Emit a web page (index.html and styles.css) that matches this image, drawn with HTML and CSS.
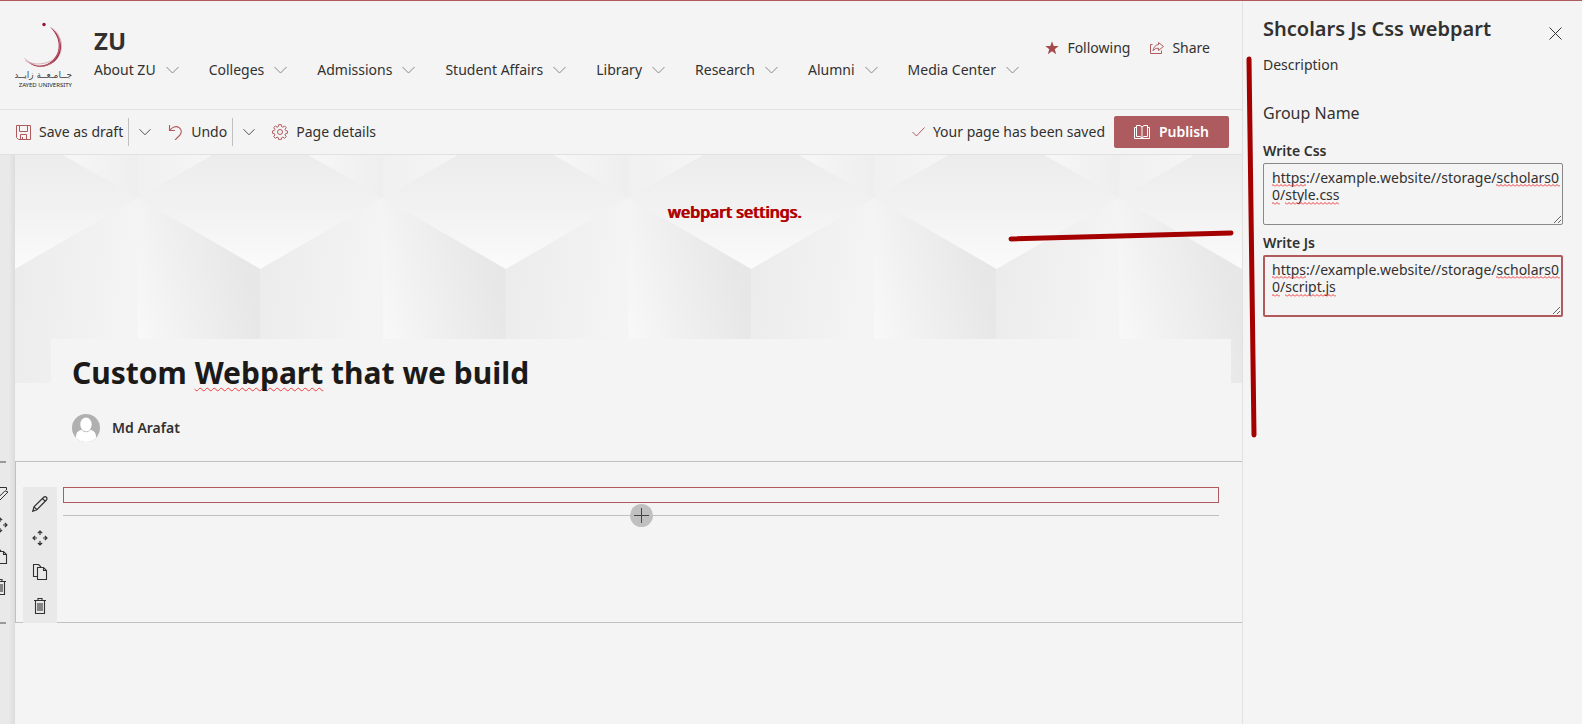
FILE: index.html
```html
<!DOCTYPE html>
<html lang="en">
<head>
<meta charset="utf-8">
<title>ZU - Custom Webpart that we build</title>
<link rel="stylesheet" href="styles.css">
</head>
<body>
<svg class="defs" width="0" height="0" aria-hidden="true">
  <defs>
    <linearGradient id="top" x1="0" y1="0" x2="0" y2="1"><stop offset="0" stop-color="#ececec"/><stop offset=".5" stop-color="#f2f2f2"/><stop offset="1" stop-color="#fbfbfb"/></linearGradient>
    <linearGradient id="left" x1="0" y1="0" x2="1" y2="0.2"><stop offset="0" stop-color="#ebebeb"/><stop offset="1" stop-color="#f4f4f4"/></linearGradient>
    <linearGradient id="right" gradientUnits="userSpaceOnUse" x1="123" y1="200" x2="245" y2="170"><stop offset="0" stop-color="#f9f9f9"/><stop offset=".4" stop-color="#f1f1f1"/><stop offset="1" stop-color="#e7e7e7"/></linearGradient>
    <linearGradient id="wedgeA" x1="0" y1="0" x2="1" y2="0"><stop offset="0" stop-color="#f7f7f7"/><stop offset="1" stop-color="#eeeeee"/></linearGradient>
    <linearGradient id="wedgeB" x1="0" y1="0" x2="1" y2="0"><stop offset="0" stop-color="#f0f0f0"/><stop offset="1" stop-color="#f5f5f5"/></linearGradient>
    <g id="tile">
      <path fill="url(#wedgeA)" d="M48 0h75v43z"/>
      <path fill="url(#wedgeB)" d="M123 0h75l-75 43z"/>
      <path fill="url(#left)" d="M0 114L123 43v185H0z"/>
      <path fill="url(#right)" d="M123 43l123 71v114H123z"/>
    </g>
    <symbol id="chev" viewBox="0 0 13 8"><path d="M.5 1l6 6 6-6" fill="none" stroke="currentColor"/></symbol>
    <symbol id="pencil" viewBox="0 0 16 16"><path d="M.8 15.2l1.200-4.400L11.700 1.300c.8-.8 2-.8 2.700 0 .8.700.8 1.900 0 2.700L4.900 13.700zM2 10.800l2.900 2.900M10.500 2.500l2.800 2.800" fill="none" stroke="currentColor" stroke-width="1.200"/></symbol>
    <symbol id="move" viewBox="0 0 16 16"><path d="M8 1v4M5.800 3.200L8 1l2.200 2.200M8 15v-4M5.800 12.800L8 15l2.200-2.200M1 8h4M3.200 5.800L1 8l2.200 2.200M15 8h-4M12.800 5.800L15 8l-2.200 2.200" fill="none" stroke="currentColor" stroke-width="1.200"/></symbol>
    <symbol id="copy" viewBox="0 0 16 16"><path d="M5.500 12.500h-4v-12h5l2.500 2.500M5.500 3.500h6l3 3v9h-9zM11.500 3.500v3h3" fill="none" stroke="currentColor" stroke-width="1.100"/></symbol>
    <symbol id="bin" viewBox="0 0 16 16"><path d="M2 2.500h12M6 2.500v-2h4v2M3.500 2.500v13h9v-13M6 5v8M8 5v8M10 5v8" fill="none" stroke="currentColor" stroke-width="1.100"/></symbol>
    <pattern id="wave" width="4" height="3" patternUnits="userSpaceOnUse"><path d="M0 2.500l2-2 2 2" fill="none" stroke="#f03a3a"/></pattern>
  </defs>
</svg>
<div class="app">
  <div class="workspace">
    <header class="site">
      <svg class="logo" viewBox="0 0 58 66" role="img" aria-label="Zayed University">
        <circle cx="29" cy="2.500" r="1.700" fill="#951230"/>
        <path d="M34 4.500C48 13 50 31 39 40 31 46.500 19 46 13 40c8 5 17 5 24-1C47 30 46 14 34 4.500z" fill="#951230"/>
        <path d="M36 5.500c13 8 13.500 26 3.500 33.500-9 8-22 6-30-3M40 9c8 10 6 24-4 30-9 4-18 4-26-.5M42 12c6 12 2 26-10 31" fill="none" stroke="#c88490" stroke-width=".6"/>
        <text class="logo-ar" x="57" y="56" direction="rtl">جــامـعــة زايــد</text>
        <text class="logo-en" x="57" y="65" text-anchor="end">ZAYED UNIVERSITY</text>
      </svg>
      <div class="site-main">
        <h2 class="site-name">ZU</h2>
        <nav class="nav">
          <a href="#">About ZU <svg class="chev"><use href="#chev"/></svg></a>
          <a href="#">Colleges <svg class="chev"><use href="#chev"/></svg></a>
          <a href="#">Admissions <svg class="chev"><use href="#chev"/></svg></a>
          <a href="#">Student Affairs <svg class="chev"><use href="#chev"/></svg></a>
          <a href="#">Library <svg class="chev"><use href="#chev"/></svg></a>
          <a href="#">Research <svg class="chev"><use href="#chev"/></svg></a>
          <a href="#">Alumni <svg class="chev"><use href="#chev"/></svg></a>
          <a href="#">Media Center <svg class="chev"><use href="#chev"/></svg></a>
        </nav>
      </div>
      <div class="site-actions">
        <button class="cmd"><svg class="i14" viewBox="0 0 14 14"><path fill="#a4484c" d="M7 .3l1.700 4.800h5L9.700 8.200l1.500 5L7 10.200l-4.200 3 1.500-5L.3 5.100h5z"/></svg>Following</button>
        <button class="cmd"><svg class="i14" viewBox="0 0 14 14"><path fill="none" stroke="#b05a5e" d="M2.500 3.500h-2v9h11v-3M8.500 1.500l5 4-5 4V7.300C6 7 4.500 8 3 9.800c.5-3.500 2.500-6 5.500-6.200z"/></svg>Share</button>
      </div>
    </header>

    <div class="commands">
      <button class="cmd"><svg class="i15" viewBox="0 0 15 15"><path fill="none" stroke="#b05a5e" d="M.5.500h14v14h-12l-2-2zM3.500.500v6h8v-6M4.500 14.500v-5h6v5M6.500 14v-2"/></svg>Save as draft</button>
      <button class="drop" aria-label="Save options"><svg class="chev-s"><use href="#chev"/></svg></button>
      <button class="cmd spaced"><svg class="i15" viewBox="0 0 15 15"><path fill="none" stroke="#b05a5e" stroke-width="1.100" d="M1.500 0v5.500H7M1.500 5.500C4 2 8 .5 11 2.500s3 5.500.5 8L7 15"/></svg>Undo</button>
      <button class="drop" aria-label="Undo options"><svg class="chev-s"><use href="#chev"/></svg></button>
      <button class="cmd spaced"><svg class="i16" viewBox="0 0 16 16"><path fill="none" stroke="#b05a5e" d="M6.800.6h2.400l.4 2 1.300.6 1.800-1.200 1.500 1.600-1.100 1.800.5 1.200 2 .4v2.200l-2 .4-.5 1.300 1.100 1.800-1.600 1.600-1.800-1.200-1.200.6-.4 2H6.800l-.4-2-1.300-.6-1.800 1.200-1.600-1.600 1.200-1.800-.6-1.300-1.900-.4V7l1.900-.4.600-1.200L1.700 3.600 3.300 2l1.800 1.200 1.300-.6z"/><circle cx="8" cy="8" r="2.500" fill="none" stroke="#b05a5e"/></svg>Page details</button>
      <span class="saved"><svg class="check" viewBox="0 0 13 10"><path d="M.5 5l4 4 8-8.500" fill="none" stroke="#b05a5e"/></svg>Your page has been saved</span>
      <button class="publish"><svg class="i16" viewBox="0 0 16 16"><path fill="none" stroke="#fff" d="M8 2.500v11M2.500 1.500H6L8 3l2-1.500h3.500v11H10l-2 1.500-2-1.500H2.500zM2.500 3.500h-2v11h15v-11h-2"/></svg>Publish</button>
    </div>

    <div class="stage">
      <div class="gutter">
        <div class="ghost">
          <svg class="i16" viewBox="0 0 16 16"><path d="M0 1.500h14.500V4M16 6l-9 9-3 .8 1-3 8-8z" fill="none" stroke="currentColor"/></svg>
          <svg class="i16"><use href="#move"/></svg>
          <svg class="i16"><use href="#copy"/></svg>
          <svg class="i16"><use href="#bin"/></svg>
        </div>
      </div>
      <main class="page">
        <section class="hero">
          <svg class="tiles" viewBox="0 0 1230 228" preserveAspectRatio="none" aria-hidden="true">
            <path fill="url(#top)" d="M0 0h1230v114H0z"/>
            <use href="#tile"/>
            <use href="#tile" x="246"/>
            <use href="#tile" x="492"/>
            <use href="#tile" x="738"/>
            <use href="#tile" x="984"/>
          </svg>
          <p class="note">webpart settings.</p>
          <div class="title-card">
            <h1>Custom <span class="misspelt">Webpart</span> that we build</h1>
            <div class="author">
              <svg class="avatar" viewBox="0 0 28 28"><defs><clipPath id="round"><circle cx="14" cy="14" r="14"/></clipPath></defs><g clip-path="url(#round)"><path fill="#b0b0b0" d="M0 0h28v28H0z"/><path fill="#fff" d="M4 28v-5c0-5 3-7 6-7 2 3 6 3 8 0 3 0 6 2 6 7v5z"/><ellipse cx="14" cy="10.500" rx="5.700" ry="7" fill="#fff"/></g></svg>
              <span>Md Arafat</span>
            </div>
          </div>
        </section>
        <section class="zone">
          <div class="tools">
            <button aria-label="Edit web part"><svg class="i16"><use href="#pencil"/></svg></button>
            <button aria-label="Move web part"><svg class="i16"><use href="#move"/></svg></button>
            <button aria-label="Duplicate web part"><svg class="i16"><use href="#copy"/></svg></button>
            <button aria-label="Delete web part"><svg class="i16"><use href="#bin"/></svg></button>
          </div>
          <div class="column">
            <div class="webpart"></div>
            <div class="adder"><button class="plus" aria-label="Add a web part"><svg class="i15" viewBox="0 0 15 15"><path d="M7.500 0v15M0 7.500h15" stroke="#444" fill="none"/></svg></button></div>
          </div>
        </section>
      </main>
    </div>
  </div>

  <aside class="panel">
    <div class="panel-head">
      <h2>Shcolars Js Css webpart</h2>
      <button class="close" aria-label="Close"><svg viewBox="0 0 13 13"><path d="M.5.500l12 12M12.500.500l-12 12" stroke="#333" fill="none"/></svg></button>
    </div>
    <p class="desc">Description</p>
    <h3>Group Name</h3>
    <label for="css">Write Css</label>
    <div class="field">
      <textarea id="css" spellcheck="false">https://example.website//storage/scholars00/style.css</textarea>
      <svg class="marks" aria-hidden="true"><g fill="url(#wave)"><path d="M9 21h34v3H9zM233 21h64v3h-64zM9 39h8v3H9zM22 39h54v3H22z"/></g></svg>
    </div>
    <label for="js">Write Js</label>
    <div class="field">
      <textarea id="js" class="active" spellcheck="false">https://example.website//storage/scholars00/script.js</textarea>
      <svg class="marks" aria-hidden="true"><g fill="url(#wave)"><path d="M9 21h34v3H9zM233 21h64v3h-64zM9 39h8v3H9zM22 39h51v3H22z"/></g></svg>
    </div>
    <svg class="stroke-v" viewBox="0 0 12 384" aria-hidden="true"><path d="M3 3l5 376"/></svg>
  </aside>
  <svg class="stroke-h" viewBox="0 0 228 14" aria-hidden="true"><path d="M4 10l220-6"/></svg>
</div>
</body>
</html>
```
FILE: styles.css
```css
* { box-sizing: border-box; }
body {
  margin: 0;
  background: #f4f4f4;
  color: #323130;
  font: 14px/20px "Noto Sans", "DejaVu Sans", sans-serif;
}
h1, h2, h3, p { margin: 0; }
button { border: 0; padding: 0; background: none; color: inherit; font: inherit; }
svg { display: block; flex: none; }
.defs { position: absolute; }
.app {
  position: relative;
  display: grid;
  grid-template-columns: minmax(0, 1fr) 340px;
  min-height: 100vh;
  border-top: 1px solid #b05a5e;
}
.workspace { display: flex; flex-direction: column; }
.i14 { width: 14px; height: 14px; }
.i15 { width: 15px; height: 15px; }
.i16 { width: 16px; height: 16px; }

.site {
  display: flex;
  height: 109px;
  padding: 21px 32px 0 15px;
  border-bottom: 1px solid #e1e1e1;
}
.logo { width: 58px; height: 66px; }
.logo-ar { font: 9px "DejaVu Sans", sans-serif; fill: #444; }
.logo-en { font: 6px "Noto Sans", sans-serif; fill: #222; }
.site-main { flex: 1; padding-left: 21px; }
.site-name { font-size: 24px; line-height: 38px; font-weight: 700; }
.nav { display: flex; gap: 30px; }
.nav a {
  display: flex;
  align-items: center;
  gap: 10px;
  color: inherit;
  text-decoration: none;
  white-space: nowrap;
}
.chev { width: 13px; height: 8px; color: #8a8886; }
.chev-s { width: 12px; height: 8px; color: #444; }
.site-actions { display: flex; gap: 20px; height: 20px; margin-top: 16px; }
.cmd { display: flex; align-items: center; gap: 8px; white-space: nowrap; }

.commands {
  display: flex;
  align-items: center;
  height: 45px;
  padding: 0 13px 0 16px;
  border-bottom: 1px solid #e1e1e1;
}
.drop {
  display: flex;
  align-items: center;
  height: 28px;
  margin-left: 5px;
  padding-left: 10px;
  border-left: 1px solid #c0c0c0;
}
.spaced { margin-left: 17px; }
.saved { display: flex; align-items: center; gap: 8px; margin-left: auto; white-space: nowrap; }
.check { width: 13px; height: 10px; }
.publish {
  display: flex;
  align-items: center;
  justify-content: center;
  gap: 9px;
  width: 115px;
  height: 32px;
  margin-left: 9px;
  border-radius: 2px;
  background: #ad5b5e;
  color: #fff;
  font-weight: 600;
}

.stage { display: flex; flex: 1; }
.gutter {
  width: 15px;
  padding-top: 306px;
  background: linear-gradient(90deg, #e9e9e9 9px, #dcdcdc);
}
.ghost {
  display: flex;
  flex-direction: column;
  align-items: flex-end;
  gap: 15px;
  width: 8px;
  height: 163px;
  padding-top: 25px;
  overflow: hidden;
  background:
    linear-gradient(#999, #999) 0 0 / 6px 2px no-repeat,
    linear-gradient(#999, #999) 0 100% / 6px 2px no-repeat;
}
.page { flex: 1; min-width: 0; }
.hero { display: grid; }
.hero > * { grid-area: 1 / 1; }
.tiles { width: 100%; height: 228px; }
.note {
  justify-self: center;
  align-self: start;
  margin: 46px 0 0 212px;
  color: #b00000;
  font-size: 16px;
  line-height: 22px;
  font-weight: 500;
  text-shadow: 1px 0 #b00000;
}
.title-card {
  margin: 184px 11px 0 36px;
  padding: 12px 21px 19px;
  background: #f4f4f4;
}
.title-card h1 { color: #1b1a19; font-size: 30px; line-height: 44px; font-weight: 700; }
.misspelt { text-decoration: underline wavy #f03a3a 1px; text-underline-offset: 3px; text-decoration-skip-ink: none; }
.author { display: flex; align-items: center; gap: 12px; margin-top: 19px; font-weight: 600; }
.avatar { width: 28px; height: 28px; }
.zone {
  display: flex;
  gap: 6px;
  height: 162px;
  padding: 25px 23px 0 7px;
  border: solid #c0c0c0;
  border-width: 1px 0 1px 1px;
}
.tools { width: 34px; height: 136px; background: #e9e9e9; }
.tools button { display: grid; place-items: center; width: 34px; height: 34px; }
.column { flex: 1; }
.webpart { height: 16px; border: 1px solid #b05a5e; }
.adder {
  display: grid;
  place-items: center;
  height: 25px;
  background: linear-gradient(#c0c0c0, #c0c0c0) 0 12px / 100% 1px no-repeat;
}
.plus { display: grid; place-items: center; width: 23px; height: 23px; border-radius: 50%; background: #c0c0c0; }

.panel { position: relative; padding: 14px 19px 0 20px; border-left: 1px solid #e1e1e1; }
.panel-head { display: flex; justify-content: space-between; }
.panel-head h2 { font-size: 20px; line-height: 28px; font-weight: 600; white-space: nowrap; }
.close { padding: 8px 1px 0 0; }
.close svg { width: 13px; height: 13px; }
.desc { margin-top: 12px; }
h3 { margin-top: 27px; font-size: 16px; line-height: 22px; font-weight: 400; }
label { display: block; margin-top: 14px; font-weight: 600; line-height: 25px; }
.field { position: relative; }
textarea {
  display: block;
  width: 100%;
  height: 62px;
  padding: 5px 2px 5px 8px;
  border: 1px solid #8a8886;
  border-radius: 2px;
  background: transparent;
  color: inherit;
  font: inherit;
  line-height: 17px;
  word-break: break-all;
  resize: vertical;
  outline: 0;
}
textarea.active { padding: 4px 1px 4px 7px; border: 2px solid #b05a5e; }
.field + label { margin-top: 5px; }
.marks { position: absolute; inset: 0; width: 100%; height: 62px; pointer-events: none; }
.stroke-v, .stroke-h { position: absolute; fill: none; stroke: #a40000; stroke-width: 5; stroke-linecap: round; }
.stroke-v { left: 3px; top: 55px; width: 12px; height: 384px; }
.stroke-h { right: 347px; top: 228px; width: 228px; height: 14px; }
```
